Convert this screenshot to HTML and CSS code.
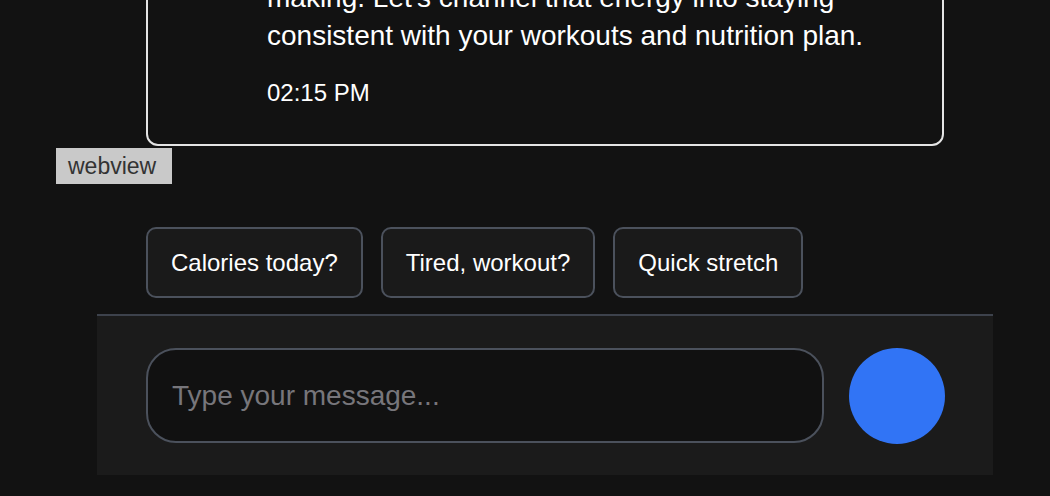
FILE: index.html
```html
<!DOCTYPE html>
<html lang="en">
<head>
<meta charset="utf-8">
<title>Chat</title>
<link rel="stylesheet" href="styles.css">
</head>
<body>
<div class="app">
  <div class="messages">
    <div class="bubble">
      <p class="bubble-text">making. Let's channel that energy into staying consistent with your workouts and nutrition plan.</p>
      <div class="time">02:15 PM</div>
    </div>
    <span class="tag">webview</span>
  </div>
  <div class="chips">
    <button class="chip">Calories today?</button>
    <button class="chip">Tired, workout?</button>
    <button class="chip">Quick stretch</button>
  </div>
  <div class="composer">
    <div class="input">Type your message...</div>
    <button class="send" aria-label="Send"></button>
  </div>
</div>
</body>
</html>
```

FILE: styles.css
```css
* { box-sizing: border-box; }
html, body {
  margin: 0;
  padding: 0;
  background: #121212;
  font-family: "Liberation Sans", Arial, sans-serif;
  color: #ffffff;
  overflow: hidden;
}
.app {
  width: 896px;
  margin-left: 97px;
}
.messages {
  position: relative;
  padding: 0 49px;
}
.bubble {
  margin-top: -23px;
  border: 2px solid #e4e4e4;
  border-radius: 12px;
  padding: 0 24px 37px 119px;
  background: #121212;
}
.bubble-text {
  margin: 0;
  width: 620px;
  font-size: 28px;
  line-height: 38px;
}
.time {
  margin-top: 24px;
  font-size: 24px;
  line-height: 28px;
}
.tag {
  position: absolute;
  left: -41px;
  bottom: -38px;
  background: #c9c9c9;
  color: #333;
  font-size: 23px;
  line-height: 36px;
  padding: 0 0 0 12px;
  width: 116px;
}
.chips {
  display: flex;
  gap: 18px;
  padding: 81px 49px 16px;
}
.chip {
  height: 71px;
  padding: 0 23px;
  border: 2px solid #4b515c;
  border-radius: 10px;
  background: #1a1a1a;
  color: #ffffff;
  font-family: "Liberation Sans", Arial, sans-serif;
  font-size: 24px;
}
.composer {
  display: flex;
  align-items: center;
  gap: 25px;
  height: 161px;
  padding: 0 48px 0 49px;
  background: #1b1b1b;
  border-top: 2px solid #3d424c;
}
.input {
  flex: 0 0 678px;
  height: 95px;
  border: 2px solid #4b515c;
  border-radius: 30px;
  background: #111111;
  padding: 0 24px;
  display: flex;
  align-items: center;
  color: #77767b;
  font-size: 28px;
}
.send {
  width: 96px;
  height: 96px;
  border-radius: 50%;
  border: 0;
  background: #3174f5;
  padding: 0;
}
```
